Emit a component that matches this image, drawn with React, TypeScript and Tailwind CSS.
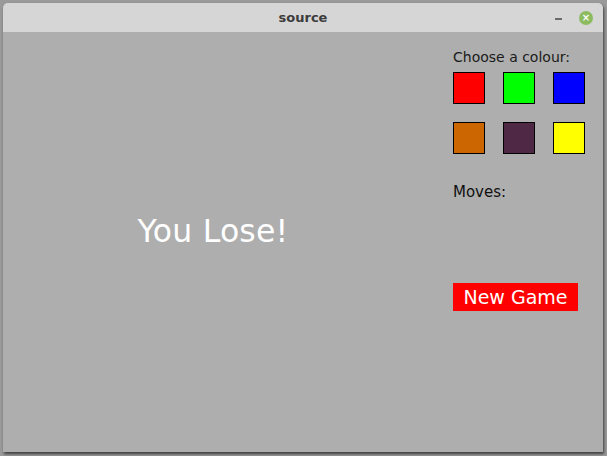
const swatches = ["#ff0000", "#00ff00", "#0000ff", "#cc6600", "#4f2846", "#ffff00"];

const App = () => {
  return (
    <main className="w-[607px] h-[456px] bg-[#9a9a9a] pl-[3px] pt-[3px] overflow-hidden font-['DejaVu_Sans',sans-serif]">
      <div className="w-[600px] h-[449px] flex flex-col rounded-t-[5px] overflow-hidden shadow-[1px_2px_3px_rgba(0,0,0,0.6)]">
        <div className="h-[29px] bg-[#d6d6d6] flex items-center relative">
          <div className="w-full text-center text-[13px] font-bold text-[#3c3c3c]">source</div>
          <div className="absolute left-[552px] top-[15px] w-[7px] h-[2px] bg-[#6a6a6a]" />
          <div className="absolute left-[576px] top-[8px] w-[14px] h-[14px] rounded-full bg-[#8dbb5f] flex items-center justify-center text-white text-[10px] font-bold leading-none">
            ×
          </div>
        </div>
        <div className="flex-1 bg-[#aeaeae] flex">
          <div className="w-[420px] flex justify-center pt-[180px]">
            <span className="text-white text-[31.5px] leading-[38px] tracking-[0.2px]">You Lose!</span>
          </div>
          <div className="flex-1 pl-[30px] pt-[15px]">
            <div className="text-[14px] text-[#1a1a1a] leading-[20px]">Choose a colour:</div>
            <div className="grid grid-cols-[32px_32px_32px] gap-x-[18px] gap-y-[18px] mt-[5px]">
              {swatches.map((c) => (
                <div key={c} className="w-[32px] h-[32px] border border-black" style={{ backgroundColor: c }} />
              ))}
            </div>
            <div className="text-[15px] text-[#111] mt-[28px] leading-[20px]">Moves:</div>
            <div className="mt-[81px] w-[125px] h-[28px] bg-[#ff0000] text-white text-[19px] leading-[28px] text-center">
              New Game
            </div>
          </div>
        </div>
      </div>
    </main>
  );
};

export default App;
